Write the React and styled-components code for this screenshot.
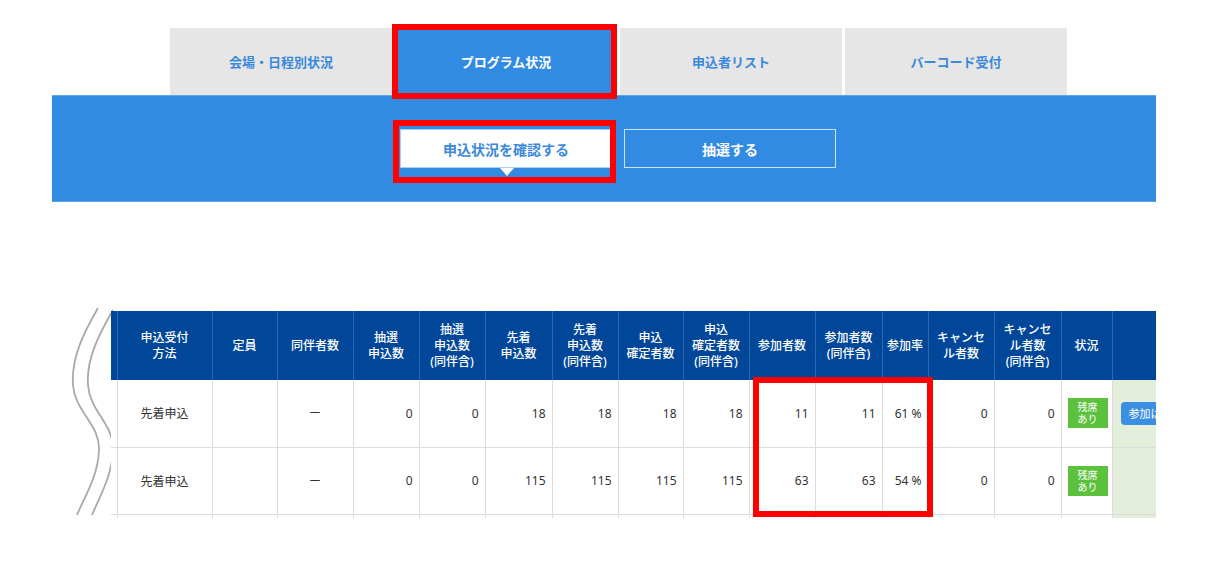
import React from "react";
import styled, { createGlobalStyle } from "styled-components";

const GlobalStyle = createGlobalStyle`
  body {
    margin: 0;
    background: #fff;
    font-family: "Noto Sans", "Noto Sans CJK JP", sans-serif;
  }
`;

const Page = styled.div`
  padding-top: 28px;
  width: 1212px;
  height: 565px;
  overflow: hidden;
`;

const TabBar = styled.div`
  display: flex;
  gap: 3px;
  margin-left: 170px;
`;

const Tab = styled.div`
  position: relative;
  width: 222px;
  height: 67px;
  display: flex;
  align-items: center;
  justify-content: center;
  font-size: 13px;
  font-weight: 700;
  background: ${(p) => (p.$active ? "#328be3" : "#e6e6e6")};
  color: ${(p) => (p.$active ? "#fff" : "#3a89dd")};
`;

// red annotation frame drawn over the element it marks
const Mark = styled.div`
  position: absolute;
  border: 6px solid #ff0000;
  pointer-events: none;
  top: ${(p) => p.$t}px;
  left: ${(p) => p.$l}px;
  right: ${(p) => p.$r}px;
  bottom: ${(p) => p.$b}px;
`;

const CellMark = styled.div`
  position: absolute;
  box-sizing: border-box;
  border: 6px solid #ff0000;
  pointer-events: none;
  left: 642px;
  top: 66px;
  width: 180px;
  height: 140px;
`;

const Band = styled.div`
  margin-left: 52px;
  width: 1104px;
  height: 107px;
  box-sizing: border-box;
  background: #328be3;
  border-top: 1px solid #5ea6ec;
  border-bottom: 1px solid #5ea6ec;
  padding-top: 33px;
`;

const ButtonRow = styled.div`
  display: flex;
  gap: 12px;
  margin-left: 348px;
`;

const ModeButton = styled.div`
  position: relative;
  width: 212px;
  height: 39px;
  box-sizing: border-box;
  display: flex;
  align-items: center;
  justify-content: center;
  font-size: 14px;
  font-weight: 700;
  background: ${(p) => (p.$active ? "#fff" : "transparent")};
  color: ${(p) => (p.$active ? "#3a89dd" : "#fff")};
  border: 1px solid ${(p) => (p.$active ? "#a9d0f5" : "rgba(255,255,255,0.75)")};

  ${(p) =>
    p.$active &&
    `
    &::after {
      content: "";
      position: absolute;
      left: 99px;
      bottom: -9px;
      border-left: 7px solid transparent;
      border-right: 7px solid transparent;
      border-top: 8px solid #fff;
    }
  `}
`;

const TableSection = styled.div`
  position: relative;
  margin-top: 109px;
  padding-left: 111px;
`;

const Wave = styled.svg`
  position: absolute;
  left: 60px;
  top: -11px;
  width: 70px;
  height: 225px;
`;

const TableClip = styled.div`
  position: relative;
  width: 1045px;
  height: 207px;
  overflow: hidden;
`;

const Table = styled.table`
  border-collapse: collapse;
  table-layout: fixed;
  width: 1101px;
  font-size: 12px;
`;

const Th = styled.th`
  background: #00479a;
  color: #fff;
  font-weight: 500;
  height: 69px;
  padding: 0 2px;
  line-height: 16px;
  text-align: center;
  border-left: 1px solid rgba(255, 255, 255, 0.18);
  box-sizing: border-box;
  &:first-child {
    border-left: none;
  }
`;

const Td = styled.td`
  height: 67px;
  padding: 0 6px;
  color: #333;
  text-align: ${(p) => p.$align || "right"};
  border-left: 1px solid #dcdcdc;
  border-bottom: 1px solid #dcdcdc;
  background: ${(p) => (p.$green ? "#e3efdb" : "#fff")};
  white-space: nowrap;
  overflow: hidden;
  box-sizing: border-box;
  &:first-child {
    border-left: none;
  }
`;

const Badge = styled.div`
  width: 40px;
  height: 30px;
  margin: 0 auto;
  background: #5cc23d;
  color: #fff;
  font-size: 10px;
  line-height: 12px;
  display: flex;
  align-items: center;
  justify-content: center;
  text-align: center;
`;

const JoinButton = styled.div`
  display: inline-flex;
  align-items: center;
  height: 23px;
  padding: 0 8px;
  border-radius: 4px;
  background: #3b8fe2;
  color: #fff;
  font-size: 11px;
  margin-left: 2px;
`;

const widths = [6, 95, 65, 76, 66, 66, 67, 66, 65, 66, 66, 67, 46, 66, 67, 51, 100];

const headers = [
  "",
  ["申込受付", "方法"],
  ["定員"],
  ["同伴者数"],
  ["抽選", "申込数"],
  ["抽選", "申込数", "(同伴含)"],
  ["先着", "申込数"],
  ["先着", "申込数", "(同伴含)"],
  ["申込", "確定者数"],
  ["申込", "確定者数", "(同伴含)"],
  ["参加者数"],
  ["参加者数", "(同伴含)"],
  ["参加率"],
  ["キャンセ", "ル者数"],
  ["キャンセ", "ル者数", "(同伴含)"],
  ["状況"],
  [],
];

const rows = [
  { counts: ["0", "0", "18", "18", "18", "18", "11", "11"], rate: "61 %", join: true },
  { counts: ["0", "0", "115", "115", "115", "115", "63", "63"], rate: "54 %", join: false },
  { counts: ["", "", "", "", "", "", "", ""], rate: "", join: false, empty: true },
];

const tabs = ["会場・日程別状況", "プログラム状況", "申込者リスト", "バーコード受付"];

export default function App() {
  return (
    <Page>
      <GlobalStyle />
      <TabBar>
        {tabs.map((t, i) => (
          <Tab key={t} $active={i === 1}>
            {t}
            {i === 1 && <Mark $t={-4} $l={-3} $r={0} $b={-4} />}
          </Tab>
        ))}
      </TabBar>
      <Band>
        <ButtonRow>
          <ModeButton $active>
            申込状況を確認する
            <Mark $t={-10} $l={-8} $r={-5} $b={-16} />
          </ModeButton>
          <ModeButton>抽選する</ModeButton>
        </ButtonRow>
      </Band>
      <TableSection>
        <Wave viewBox="60 300 70 225">
          <path
            d="M98 308 C84 332 71 358 73 385 C75 412 100 424 99 450 C98 476 85 496 77 515"
            fill="none"
            stroke="#a9a9a9"
            strokeWidth="1.8"
          />
          <path
            d="M113 310 C99 334 86 360 88 385 C90 412 114 424 113 450 C112 476 100 496 92 515"
            fill="none"
            stroke="#a9a9a9"
            strokeWidth="1.8"
          />
        </Wave>
        <TableClip>
          <Table>
            <colgroup>
              {widths.map((w, i) => (
                <col key={i} style={{ width: w }} />
              ))}
            </colgroup>
            <thead>
              <tr>
                {headers.map((h, i) => (
                  <Th key={i}>
                    {Array.isArray(h) &&
                      h.map((line, j) => (
                        <React.Fragment key={j}>
                          {j > 0 && <br />}
                          {line}
                        </React.Fragment>
                      ))}
                  </Th>
                ))}
              </tr>
            </thead>
            <tbody>
              {rows.map((r, i) => (
                <tr key={i}>
                  <Td />
                  <Td $align="center">{r.empty ? "" : "先着申込"}</Td>
                  <Td />
                  <Td $align="center">{r.empty ? "" : "ー"}</Td>
                  {r.counts.map((c, j) => (
                    <Td key={j}>{c}</Td>
                  ))}
                  <Td>{r.rate}</Td>
                  <Td>{r.empty ? "" : "0"}</Td>
                  <Td>{r.empty ? "" : "0"}</Td>
                  <Td $align="center">
                    {!r.empty && (
                      <Badge>
                        残席
                        <br />
                        あり
                      </Badge>
                    )}
                  </Td>
                  <Td $align="left" $green>
                    {r.join && <JoinButton>参加はこちら</JoinButton>}
                  </Td>
                </tr>
              ))}
            </tbody>
          </Table>
          <CellMark />
        </TableClip>
      </TableSection>
    </Page>
  );
}
